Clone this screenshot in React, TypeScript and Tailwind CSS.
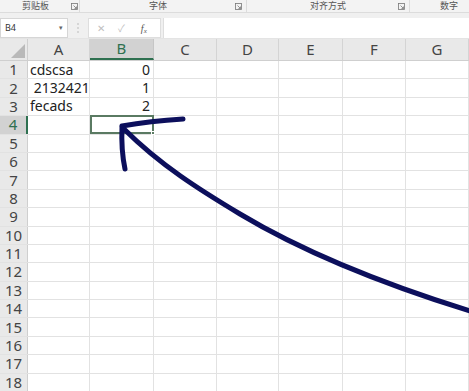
import React from "react";

const cols = [
  { name: "A", w: 62 },
  { name: "B", w: 64 },
  { name: "C", w: 63 },
  { name: "D", w: 62 },
  { name: "E", w: 64 },
  { name: "F", w: 63 },
  { name: "G", w: 63 },
];

const data: Record<number, { a?: string; b?: string }> = {
  1: { a: "cdscsa", b: "0" },
  2: { a: "\u00a02132421", b: "1" },
  3: { a: "fecads", b: "2" },
};

const font = { fontFamily: '"Noto Sans", "Noto Sans CJK SC", sans-serif' };

function Launcher() {
  return (
    <svg width="7" height="7" viewBox="0 0 7 7" className="text-[#777]">
      <rect x="0.5" y="0.5" width="6" height="6" fill="none" stroke="currentColor" strokeWidth="0.8" />
      <path d="M2.5 2.5 L5.5 5.5 M5.5 3.5 V5.5 H3.5" stroke="currentColor" strokeWidth="0.8" fill="none" />
    </svg>
  );
}

export default function App() {
  const rows = Array.from({ length: 18 }, (_, i) => i + 1);

  return (
    <div className="relative w-[469px] h-[391px] overflow-hidden bg-white" style={font}>
      {/* ribbon group labels */}
      <div className="flex h-[13px] bg-[#f3f3f3] border-b border-[#dcdcdc] text-[9px] leading-[12px] text-[#555]">
        <div className="w-[80px] flex items-center border-r border-[#dcdcdc]">
          <span className="ml-[22px]">剪贴板</span>
          <span className="ml-auto mr-[1px] flex"><Launcher /></span>
        </div>
        <div className="w-[167px] flex items-center border-r border-[#dcdcdc]">
          <span className="ml-[69px]">字体</span>
          <span className="ml-auto mr-[4px] flex"><Launcher /></span>
        </div>
        <div className="w-[163px] flex items-center border-r border-[#dcdcdc]">
          <span className="ml-[63px]">对齐方式</span>
          <span className="ml-auto mr-[4px] flex"><Launcher /></span>
        </div>
        <div className="flex-1 flex items-center">
          <span className="ml-[30px]">数字</span>
        </div>
      </div>
      <div className="h-[5px] bg-[#f0f0f0]" />

      {/* formula bar */}
      <div className="flex h-[20px] bg-[#f0f0f0] items-stretch">
        <div className="w-[68px] bg-white border border-[#d6d6d6] flex items-center px-[4px] text-[9px] text-[#333]">
          <span>B4</span>
          <span className="ml-auto text-[7px] text-[#666]">▾</span>
        </div>
        <div className="w-[20px] flex items-center justify-center">
          <svg width="2" height="10" viewBox="0 0 2 10">
            <circle cx="1" cy="1" r="0.8" fill="#b5b5b5" />
            <circle cx="1" cy="5" r="0.8" fill="#b5b5b5" />
            <circle cx="1" cy="9" r="0.8" fill="#b5b5b5" />
          </svg>
        </div>
        <div className="w-[73px] bg-white border border-[#dedede] flex items-center text-[#c0c0c0] text-[10px]">
          <span className="ml-[8px]">✕</span>
          <span className="ml-[13px]">✓</span>
          <span className="ml-[16px] italic text-[#555] text-[10px]" style={{ fontFamily: '"Liberation Serif", serif' }}>
            f<sub className="text-[7px]">x</sub>
          </span>
        </div>
        <div className="w-[2px]" />
        <div className="flex-1 bg-white border-l border-[#dedede]" />
      </div>
      <div className="h-[1px] bg-[#e4e4e4]" />

      {/* sheet */}
      <div className="text-[14px] text-[#222]">
        <div className="flex h-[22px] bg-[#e9e9e9] border-b border-[#cfcfcf]">
          <div className="w-[28px] relative border-r border-[#cfcfcf]">
            <svg className="absolute right-[2px] bottom-[2px]" width="14" height="14" viewBox="0 0 14 14">
              <path d="M14 0 L14 14 L0 14 Z" fill="#b9b9b9" />
            </svg>
          </div>
          {cols.map((c) => (
            <div
              key={c.name}
              style={{ width: c.w }}
              className={
                c.name === "B"
                  ? "flex items-center justify-center bg-[#d2d2d2] text-[#2e7050] border-r border-[#c6c6c6] border-b-2 border-b-[#2e7050] text-[15px]"
                  : "flex items-center justify-center text-[#444] border-r border-[#d4d4d4] text-[15px]"
              }
            >
              {c.name}
            </div>
          ))}
        </div>
        {rows.map((r) => (
          <div key={r} className="flex h-[18.4px] border-b border-[#e2e2e2]">
            <div
              className={
                r === 4
                  ? "w-[28px] bg-[#d2d2d2] text-[#2e7050] border-r-2 border-[#2e7050] flex items-center justify-center leading-none text-[15px]"
                  : "w-[28px] bg-[#e9e9e9] text-[#444] border-r border-[#cfcfcf] flex items-center justify-center leading-none text-[15px]"
              }
            >
              {r}
            </div>
            {cols.map((c) => (
              <div
                key={c.name}
                style={{ width: c.w }}
                className={
                  r === 4 && c.name === "B"
                    ? "relative border-2 border-[#5a7a62] -mt-[1px]"
                    : "border-r border-[#e2e2e2] flex items-center leading-none overflow-visible whitespace-nowrap"
                }
              >
                {c.name === "A" && data[r]?.a && <span className="pl-[2px]">{data[r].a}</span>}
                {c.name === "B" && data[r]?.b && <span className="ml-auto pr-[3px]">{data[r].b}</span>}
                {r === 4 && c.name === "B" && (
                  <span className="absolute -right-[3px] -bottom-[3px] w-[4px] h-[4px] bg-[#5a7a62] border border-white" />
                )}
              </div>
            ))}
          </div>
        ))}
      </div>

      {/* hand-drawn arrow */}
      <svg className="absolute left-0 top-0 pointer-events-none" width="469" height="391" viewBox="0 0 469 391">
        <g stroke="#0c0f5c" strokeWidth="5" strokeLinecap="round" fill="none">
          <path d="M122 126 Q150 121 183 119" />
          <path d="M122 127 Q121 150 125 169" />
          <path d="M124 129 C160 165 200 190 240 214 C300 250 380 283 470 311" />
        </g>
      </svg>
    </div>
  );
}
